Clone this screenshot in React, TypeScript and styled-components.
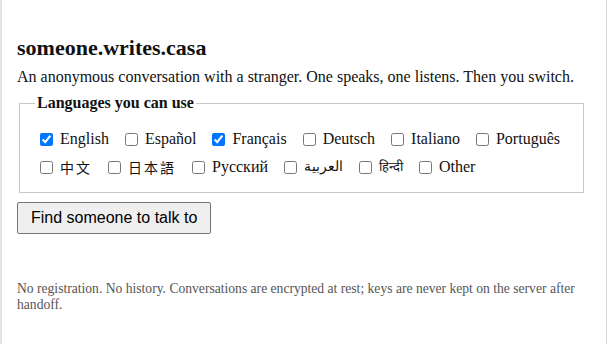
import React from 'react'
import styled, {createGlobalStyle} from 'styled-components'

const languages = [
    {name: 'English', checked: true},
    {name: 'Español', checked: false},
    {name: 'Français', checked: true},
    {name: 'Deutsch', checked: false},
    {name: 'Italiano', checked: false},
    {name: 'Português', checked: false},
    {name: '中文', checked: false, size: 14, cjk: true},
    {name: '日本語', checked: false, size: 14, cjk: true},
    {name: 'Русский', checked: false},
    {name: 'العربية', checked: false, size: 14},
    {name: 'हिन्दी', checked: false, size: 13},
    {name: 'Other', checked: false},
]

const App: React.FC = () => {
    return (
        <>
            <GlobalStyle/>
            <StyledPage>
                <StyledTitle>someone.writes.casa</StyledTitle>
                <StyledIntro>
                    An anonymous conversation with a stranger. One speaks, one listens. Then you switch.
                </StyledIntro>

                <StyledFieldset>
                    <StyledLegend>Languages you can use</StyledLegend>
                    <StyledOptions>
                        {languages.map(lang => (
                            <StyledOption key={lang.name}>
                                <StyledCheckbox type="checkbox" defaultChecked={lang.checked}/>
                                <StyledLangName cjk={!!lang.cjk} size={lang.size ?? 16}>{lang.name}</StyledLangName>
                            </StyledOption>
                        ))}
                    </StyledOptions>
                </StyledFieldset>

                <StyledButton type="button">Find someone to talk to</StyledButton>

                <StyledNote>
                    No registration. No history. Conversations are encrypted at rest; keys are never kept on the server after handoff.
                </StyledNote>
            </StyledPage>
        </>
    )
}
export default App

const GlobalStyle = createGlobalStyle`
    html, body {
        margin: 0;
        padding: 0;
        background: #fff;
    }
`

const StyledPage = styled.main`
    box-sizing: border-box;
    width: 607px;
    min-height: 344px;
    padding: 35px 20px 0 15px;
    border-left: 2px solid #e3e3e3;
    border-right: 1px solid #dcdcdc;
    font-family: "Liberation Serif", "Times New Roman", serif;
    color: #111;
`

const StyledTitle = styled.h1`
    margin: 0;
    font-size: 22px;
    line-height: 26px;
    font-weight: bold;
`

const StyledIntro = styled.p`
    margin: 5px 0 6px;
    font-size: 16px;
    line-height: 22px;
`

const StyledFieldset = styled.fieldset`
    margin: 0 2px;
    padding: 16px 12px 14px 15px;
    border: 1px solid #c8c8c8;
`

const StyledLegend = styled.legend`
    padding: 0 2px;
    font-weight: bold;
    font-size: 16px;
`

const StyledOptions = styled.div`
    display: flex;
    flex-wrap: wrap;
    padding-left: 5px;
    row-gap: 6px;
    column-gap: 16px;
`

const StyledOption = styled.label`
    display: inline-flex;
    align-items: center;
    gap: 7px;
    font-size: 16px;
    line-height: 22px;
`

const StyledCheckbox = styled.input`
    margin: 0;
    width: 13px;
    height: 13px;
`

const StyledLangName = styled.span<{cjk: boolean, size: number}>`
    font-family: ${({cjk}) => cjk ? '"Noto Sans CJK SC", sans-serif' : '"Liberation Serif", "DejaVu Serif", serif'};
    font-size: ${({size}) => size}px;
    letter-spacing: ${({cjk}) => cjk ? '2px' : '0'};
`

const StyledButton = styled.button`
    display: block;
    margin-top: 9px;
    padding: 6px 13px;
    font-family: "Liberation Sans", Arial, sans-serif;
    font-size: 16px;
    color: #000;
    background: #efefef;
    border: 1px solid #767676;
    border-radius: 2px;
`

const StyledNote = styled.p`
    margin: 47px 0 0;
    font-size: 13.6px;
    line-height: 16px;
    color: #555;
`
